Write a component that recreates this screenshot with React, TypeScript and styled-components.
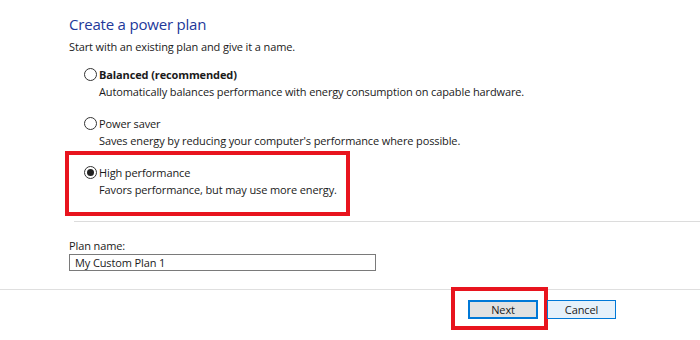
import React from 'react';
import styled, { createGlobalStyle } from 'styled-components';

const GlobalStyle = createGlobalStyle`
  html, body {
    margin: 0;
    padding: 0;
    background: #ffffff;
  }
  body {
    font-family: 'Open Sans', 'Noto Sans', sans-serif;
    color: #1a1a1a;
    letter-spacing: -0.12px;
    width: 700px;
    height: 340px;
    overflow: hidden;
  }
`;

const Page = styled.div`
  display: flex;
  flex-direction: column;
  width: 700px;
  height: 340px;
`;

const Body = styled.div`
  display: flex;
  flex-direction: column;
  padding: 13px 0 0 69px;
`;

const Title = styled.h1`
  margin: 0;
  font-size: 15px;
  line-height: 22px;
  font-weight: 400;
  letter-spacing: -0.2px;
  color: #22389a;
`;

const Intro = styled.p`
  margin: 4px 0 0;
  font-size: 11px;
  line-height: 16px;
`;

const Options = styled.div`
  display: flex;
  flex-direction: column;
  gap: 13px;
  margin: 10px 0 0 15px;
`;

const Option = styled.div`
  position: relative;
  display: flex;
  flex-direction: column;
`;

const OptionHead = styled.label<{ $bold?: boolean }>`
  display: flex;
  align-items: center;
  gap: 2px;
  height: 18px;
  font-size: 11px;
  font-weight: ${({ $bold }) => ($bold ? 700 : 400)};
`;

const Radio = styled.span<{ $checked?: boolean }>`
  box-sizing: border-box;
  display: flex;
  align-items: center;
  justify-content: center;
  width: 13px;
  height: 13px;
  border: 1px solid #333333;
  border-radius: 50%;
  background: #ffffff;

  &::after {
    content: '';
    display: ${({ $checked }) => ($checked ? 'block' : 'none')};
    width: 7px;
    height: 7px;
    border-radius: 50%;
    background: #222222;
  }
`;

const OptionDesc = styled.div`
  margin-left: 15px;
  font-size: 11px;
  line-height: 18px;
`;

const Highlight = styled.div<{ $top: number; $left: number; $w: number; $h: number }>`
  position: absolute;
  box-sizing: border-box;
  top: ${({ $top }) => $top}px;
  left: ${({ $left }) => $left}px;
  width: ${({ $w }) => $w}px;
  height: ${({ $h }) => $h}px;
  border: 4px solid #e8141e;
  pointer-events: none;
`;

const Divider = styled.hr`
  margin: 22px 0 0 5px;
  border: 0;
  border-top: 1px solid #dcdcdc;
  height: 0;
`;

const Field = styled.div`
  display: flex;
  flex-direction: column;
  margin-top: 16px;
`;

const FieldLabel = styled.label`
  font-size: 11px;
  line-height: 16px;
`;

const TextInput = styled.input`
  box-sizing: border-box;
  width: 307px;
  height: 17px;
  margin: 0;
  padding: 0 5px;
  border: 1px solid #7a7a7a;
  font-family: inherit;
  font-size: 11px;
  letter-spacing: inherit;
  color: #1a1a1a;
  outline: none;
`;

const Footer = styled.div`
  display: flex;
  justify-content: flex-end;
  gap: 9px;
  margin-top: 18px;
  padding: 10px 84px 0 0;
  border-top: 1px solid #dfdfdf;
`;

const ButtonWrap = styled.div`
  position: relative;
  display: flex;
`;

const Button = styled.button<{ $primary?: boolean }>`
  box-sizing: border-box;
  width: ${({ $primary }) => ($primary ? 70 : 69)}px;
  height: 19px;
  padding: 0;
  font-family: inherit;
  font-size: 11px;
  letter-spacing: inherit;
  color: #1a1a1a;
  background: ${({ $primary }) => ($primary ? '#e1e1e1' : '#e5f1fb')};
  border: ${({ $primary }) => ($primary ? '2px' : '1px')} solid #0078d7;
  border-radius: 0;
`;

const options = [
  {
    label: 'Balanced (recommended)',
    desc: 'Automatically balances performance with energy consumption on capable hardware.',
    bold: true,
  },
  {
    label: 'Power saver',
    desc: "Saves energy by reducing your computer's performance where possible.",
  },
  {
    label: 'High performance',
    desc: 'Favors performance, but may use more energy.',
    checked: true,
  },
];

export default function App() {
  return (
    <Page>
      <GlobalStyle />
      <Body>
        <Title>Create a power plan</Title>
        <Intro>Start with an existing plan and give it a name.</Intro>
        <Options>
          {options.map(({ label, desc, bold, checked }) => (
            <Option key={label}>
              <OptionHead $bold={bold}>
                <Radio $checked={checked} />
                {label}
              </OptionHead>
              <OptionDesc>{desc}</OptionDesc>
              {checked && <Highlight $top={-12} $left={-19} $w={285} $h={65} />}
            </Option>
          ))}
        </Options>
        <Divider />
        <Field>
          <FieldLabel>Plan name:</FieldLabel>
          <TextInput defaultValue="My Custom Plan 1" />
        </Field>
      </Body>
      <Footer>
        <ButtonWrap>
          <Button $primary>Next</Button>
          <Highlight $top={-13} $left={-17} $w={97} $h={43} />
        </ButtonWrap>
        <ButtonWrap>
          <Button>Cancel</Button>
        </ButtonWrap>
      </Footer>
    </Page>
  );
}
